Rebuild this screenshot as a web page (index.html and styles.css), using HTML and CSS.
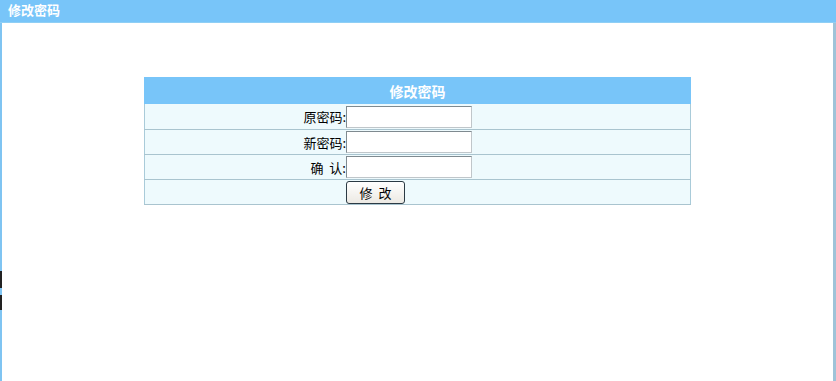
FILE: index.html
```html
<!DOCTYPE html>
<html>
<head>
    <title>修改密码</title>
    <meta charset="UTF-8">
    <link rel="stylesheet" href="styles.css">
</head>
<body>
    <div class="page">
        <div class="page-title">修改密码</div>
        <div class="page-body">
            <form class="pwd-form">
                <table class="pwd-table">
                    <tr>
                        <th colspan="2">修改密码</th>
                    </tr>
                    <tr class="first">
                        <td class="label">原密码:</td>
                        <td><input type="password" class="field"></td>
                    </tr>
                    <tr>
                        <td class="label">新密码:</td>
                        <td><input type="password" class="field"></td>
                    </tr>
                    <tr>
                        <td class="label">确&nbsp;&nbsp;认:</td>
                        <td><input type="password" class="field"></td>
                    </tr>
                    <tr>
                        <td></td>
                        <td><button type="submit" class="btn">修&nbsp;&nbsp;改</button></td>
                    </tr>
                </table>
            </form>
        </div>
    </div>
    <div class="mark mark-a"></div>
    <div class="mark mark-b"></div>
</body>
</html>
```

FILE: styles.css
```css
html, body {
    margin: 0;
    padding: 0;
    height: 100%;
    background-color: #fff;
    font-family: "Noto Sans CJK SC", "DejaVu Sans", sans-serif;
    font-size: 12px;
}

.page {
    height: 381px;
    box-sizing: border-box;
    border-left: 2px solid #7fc4f2;
    border-right: 3px solid #9fc3d8;
    display: flex;
    flex-direction: column;
}

.page-title {
    height: 22px;
    line-height: 20px;
    margin: 0 -3px 0 -2px;
    padding-left: 8px;
    background-color: #78c5f9;
    color: #fff;
    font-weight: bold;
    font-size: 13px;
    border-bottom: 1px solid #8fcff5;
}

.page-body {
    flex: 1;
    padding-top: 54px;
}

.pwd-table {
    width: 547px;
    margin: 0 auto;
    border-collapse: collapse;
    background-color: #eefafd;
    border: 1px solid #a9cbd9;
}

.pwd-table th {
    height: 25px;
    padding: 0;
    background-color: #78c5f9;
    color: #fff;
    font-size: 14px;
    font-weight: bold;
    text-align: center;
    border: 1px solid #78c5f9;
}

.pwd-table td {
    height: 24px;
    padding: 0;
    border-top: 1px solid #a9c4cf;
    border-bottom: 1px solid #a9c4cf;
    color: #000;
    font-size: 13px;
}

.pwd-table .first td {
    height: 25px;
}

.pwd-table td.label {
    width: 201px;
    text-align: right;
}

.field {
    display: block;
    width: 126px;
    height: 22px;
    box-sizing: border-box;
    margin: 0;
    border: 1px solid #7f8a90;
    border-right-color: #c0c6ca;
    border-bottom-color: #c0c6ca;
    background-color: #fff;
}

.btn {
    display: block;
    width: 59px;
    height: 23px;
    margin: 0;
    padding: 0;
    font-family: "Noto Sans CJK SC", "DejaVu Sans", sans-serif;
    font-size: 13px;
    color: #000;
    background: linear-gradient(#ffffff, #ece9e3);
    border: 1px solid #2b3a44;
    border-radius: 3px;
}

.mark {
    position: absolute;
    left: 0;
    width: 2px;
    background-color: #222;
}

.mark-a {
    top: 271px;
    height: 17px;
}

.mark-b {
    top: 295px;
    height: 15px;
}
```
